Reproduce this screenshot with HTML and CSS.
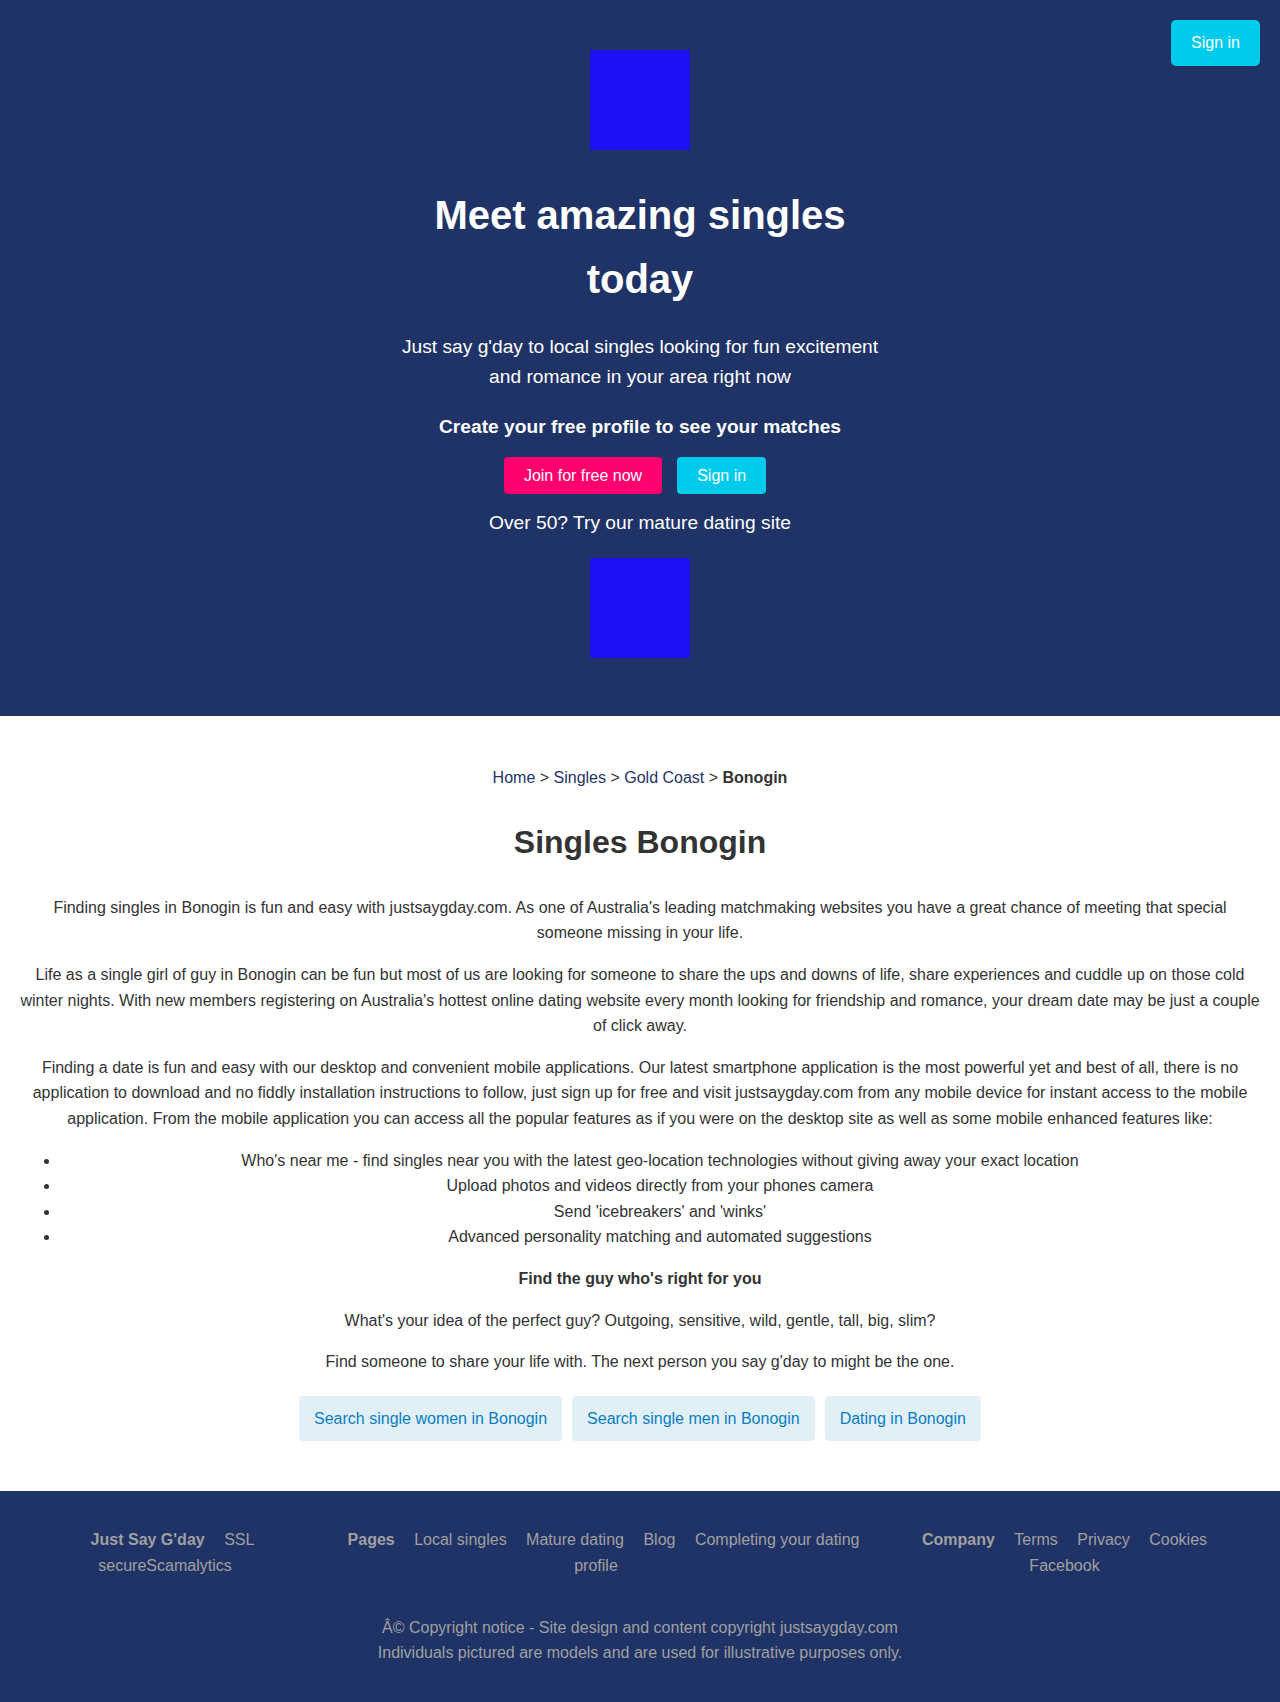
FILE: index.html
```html
<!DOCTYPE html>
<html lang="en">
<head>
<meta charset="utf-8">
<title>Singles Bonogin</title>
<link rel="stylesheet" href="styles.css">
</head>
<body>
<header class="hero">
  <a class="btn btn-cyan top-signin" href="#">Sign in</a>
  <div class="logo"></div>
  <h1 class="hero-title">Meet amazing singles today</h1>
  <p class="hero-sub">Just say g'day to local singles looking for fun excitement and romance in your area right now</p>
  <h3 class="hero-cta">Create your free profile to see your matches</h3>
  <div class="hero-buttons">
    <a class="btn btn-pink" href="#">Join for free now</a>
    <a class="btn btn-cyan" href="#">Sign in</a>
  </div>
  <p class="hero-mature">Over 50? Try our mature dating site</p>
  <div class="logo logo-bottom"></div>
</header>

<main class="content">
  <p class="crumbs"><a href="#">Home</a> &gt; <a href="#">Singles</a> &gt; <a href="#">Gold Coast</a> &gt; <strong>Bonogin</strong></p>
  <h2 class="page-title">Singles Bonogin</h2>
  <p>Finding singles in Bonogin is fun and easy with justsaygday.com. As one of Australia's leading matchmaking websites you have a great chance of meeting that special someone missing in your life.</p>
  <p>Life as a single girl of guy in Bonogin can be fun but most of us are looking for someone to share the ups and downs of life, share experiences and cuddle up on those cold winter nights. With new members registering on Australia's hottest online dating website every month looking for friendship and romance, your dream date may be just a couple of click away.</p>
  <p>Finding a date is fun and easy with our desktop and convenient mobile applications. Our latest smartphone application is the most powerful yet and best of all, there is no application to download and no fiddly installation instructions to follow, just sign up for free and visit justsaygday.com from any mobile device for instant access to the mobile application. From the mobile application you can access all the popular features as if you were on the desktop site as well as some mobile enhanced features like:</p>
  <ul class="features">
    <li>Who's near me - find singles near you with the latest geo-location technologies without giving away your exact location</li>
    <li>Upload photos and videos directly from your phones camera</li>
    <li>Send 'icebreakers' and 'winks'</li>
    <li>Advanced personality matching and automated suggestions</li>
  </ul>
  <p><strong>Find the guy who's right for you</strong></p>
  <p>What's your idea of the perfect guy? Outgoing, sensitive, wild, gentle, tall, big, slim?</p>
  <p>Find someone to share your life with. The next person you say g'day to might be the one.</p>
  <div class="search-links">
    <a class="search-btn" href="#">Search single women in Bonogin</a>
    <a class="search-btn" href="#">Search single men in Bonogin</a>
    <a class="search-btn" href="#">Dating in Bonogin</a>
  </div>
</main>

<footer class="footer">
  <div class="footer-cols">
    <div class="fcol">
      <div class="fline"><strong class="fitem">Just Say G'day</strong> <a class="fitem" href="#">SSL</a></div>
      <div class="fline"><a href="#">secure</a><a href="#">Scamalytics</a></div>
    </div>
    <div class="fcol">
      <div class="fline"><strong class="fitem">Pages</strong> <a class="fitem" href="#">Local singles</a> <a class="fitem" href="#">Mature dating</a> <a class="fitem" href="#">Blog</a> <a class="fitem" href="#">Completing your dating</a></div>
      <div class="fline"><a href="#">profile</a></div>
    </div>
    <div class="fcol">
      <div class="fline"><strong class="fitem">Company</strong> <a class="fitem" href="#">Terms</a> <a class="fitem" href="#">Privacy</a> <a class="fitem" href="#">Cookies</a></div>
      <div class="fline"><a class="fitem" href="#">Facebook</a></div>
    </div>
  </div>
  <p class="copyright">Â© Copyright notice - Site design and content copyright justsaygday.com<br>Individuals pictured are models and are used for illustrative purposes only.</p>
</footer>
</body>
</html>
```

FILE: styles.css
```css
* { box-sizing: border-box; }

html, body {
  margin: 0;
  padding: 0;
}

body {
  font-family: "Liberation Sans", Arial, Helvetica, sans-serif;
  font-size: 16px;
  line-height: 1.6;
  color: #333333;
  background: #ffffff;
}

a { text-decoration: none; }

/* ---------- hero ---------- */
.hero {
  position: relative;
  background: #1f3366;
  color: #ffffff;
  display: flex;
  flex-direction: column;
  align-items: center;
  text-align: center;
  padding: 50px 20px 58px;
}

.logo {
  width: 100px;
  height: 100px;
  background: #1e10f6;
  margin-bottom: 33px;
}

.logo-bottom {
  margin: 19.6px 0 0;
}

.hero-title {
  margin: 0 0 20.6px;
  max-width: 500px;
  font-size: 40px;
  line-height: 1.6;
  font-weight: bold;
}

.hero-sub {
  margin: 0 0 18.6px;
  max-width: 500px;
  font-size: 19.2px;
  line-height: 1.6;
}

.hero-cta {
  margin: 0 0 14.6px;
  font-size: 19.2px;
  line-height: 1.6;
  font-weight: bold;
}

.hero-buttons {
  display: flex;
  gap: 15px;
  justify-content: center;
  padding-right: 10px;
}

.btn {
  display: inline-block;
  color: #ffffff;
  font-size: 16px;
  line-height: 25px;
  padding: 6px 20px;
  border-radius: 4px;
}

.btn-pink { background: #ff006e; }
.btn-cyan { background: #00cbec; }

.top-signin {
  position: absolute;
  top: 20px;
  right: 20px;
  padding: 11px 20px;
  line-height: 24px;
  border-radius: 5px;
}

.hero-mature {
  margin: 13.6px 0 0;
  font-size: 19.2px;
  line-height: 1.6;
}

/* ---------- content ---------- */
.content {
  padding: 33px 20px 45px;
  text-align: center;
}

.content p {
  margin: 16px 0;
}

.crumbs a { color: #1f3366; }

.page-title {
  font-size: 32px;
  line-height: 1.6;
  margin: 26.6px 0;
  font-weight: bold;
}

.features {
  margin: 16px 0;
  padding-left: 40px;
}

.search-links {
  display: flex;
  justify-content: center;
}

.search-btn {
  display: inline-block;
  margin: 5px;
  padding: 10px 15px;
  background: #e1f0f7;
  color: #0b7dc1;
  border-radius: 4px;
}

/* ---------- footer ---------- */
.footer {
  background: #1f3366;
  color: #a0a0a0;
  padding: 36px 20px;
  text-align: center;
}

.footer a { color: #a0a0a0; }

.footer-cols {
  display: grid;
  grid-template-columns: 280px 550px 340px;
  column-gap: 16px;
  padding-left: 5px;
}

.fitem {
  margin-left: 15px;
}

.copyright {
  margin: 36px 0 0;
}
```
